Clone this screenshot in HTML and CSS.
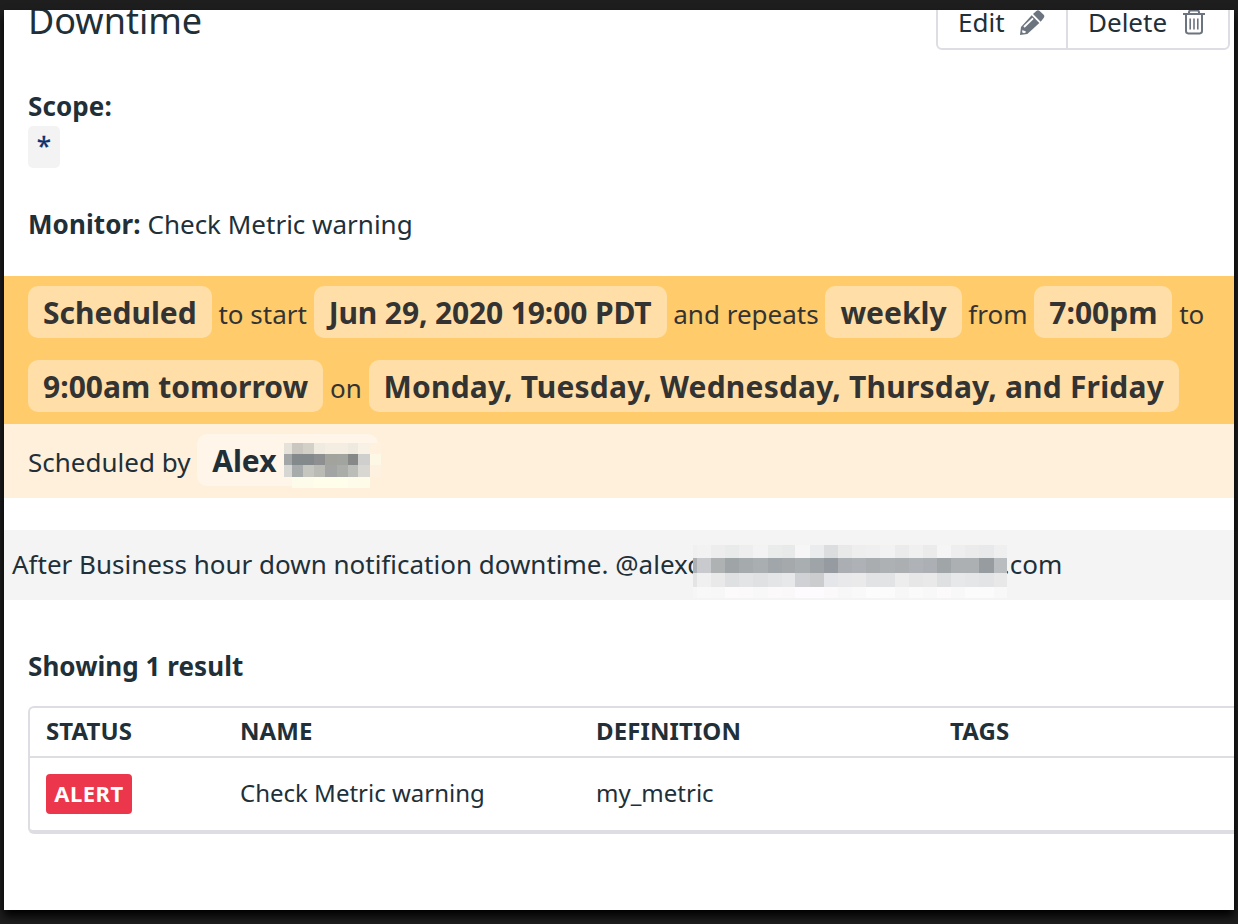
FILE: index.html
```html
<!DOCTYPE html>
<html lang="en">
<head>
<meta charset="utf-8">
<title>Downtime</title>
<link rel="stylesheet" href="styles.css">
</head>
<body>
<main class="panel">
  <header class="header">
    <h1 class="title">Downtime</h1>
    <div class="actions">
      <button class="action">Edit
        <svg class="icon pencil" viewBox="273 25 78 78"><path fill="#6c757f" fill-rule="evenodd" d="M311 44 334 67 298 100 276 103 279 79ZM315 40 325 31Q330 27 335 31L347 42Q351 47 347 52L338 63ZM290 81 317 55 313 51 286 77ZM284 87 282 95 288 98 294 95 292 91 287 90Z"/></svg>
      </button>
      <button class="action action-delete">Delete
        <svg class="icon trash" viewBox="0 0 22 26" fill="none" stroke="#6c757f" stroke-width="2"><path d="M0 5H22M6 5V3.2Q6 1.6 7.8 1.6H14.2Q16 1.6 16 3.2V5M3 5V22.1Q3 24.4 5.3 24.4H16.7Q19 24.4 19 22.1V5"/><path stroke-width="1.6" d="M7.2 9.6V20.4M11 9.6V20.4M14.8 9.6V20.4"/></svg>
      </button>
    </div>
  </header>
  <section class="scope"><b>Scope:</b><div><span class="tag">*</span></div></section>
  <section class="monitor"><b>Monitor:</b> Check Metric warning</section>
  <section class="schedule"><span class="pill">Scheduled</span> to start <span class="pill pill-date">Jun 29, 2020 19:00 PDT</span> and repeats <span class="pill">weekly</span> from <span class="pill">7:00pm</span> to<br><span class="pill pill-end">9:00am tomorrow</span> on <span class="pill pill-days">Monday, Tuesday, Wednesday, Thursday, and Friday</span></section>
  <section class="author">Scheduled by <span class="pill pill-author">Alex</span><svg class="mask mask-name" viewBox="284 440 100 50" shape-rendering="crispEdges"></svg></section>
  <section class="message"><span>After Business hour down notification downtime. @alexc</span><span class="suffix">.com</span><svg class="mask mask-mail" viewBox="693 545 314 54" shape-rendering="crispEdges"></svg></section>
  <h2 class="count">Showing 1 result</h2>
  <div class="table">
    <div class="row head"><span>STATUS</span><span>NAME</span><span>DEFINITION</span><span>TAGS</span></div>
    <div class="row"><span><b class="badge">ALERT</b></span><span>Check Metric warning</span><span>my_metric</span><span></span></div>
  </div>
</main>
<script src="mask.js"></script>
</body>
</html>
```
FILE: styles.css
```css
* { box-sizing: border-box; }
body {
  margin: 0;
  height: 924px;
  padding: 10px 4px 14px;
  overflow: hidden;
  background: #1e1e1e;
  font: 26px/36px "Noto Sans", sans-serif;
  color: #212f38;
}
b { letter-spacing: .1px; }
.panel {
  height: 900px;
  overflow: hidden;
  background: #fff;
  box-shadow: 0 6px 9px #000;
}
.header {
  display: flex;
  justify-content: space-between;
  height: 40px;
  padding: 0 4px 0 24px;
}
.title { margin: -13px 0 0; font-size: 36px; line-height: 48px; font-weight: 400; }
.actions {
  display: flex;
  height: 54px;
  margin-top: -14px;
  border: 2px solid #dddde3;
  border-radius: 6px;
}
.action {
  display: flex;
  align-items: center;
  width: 128px;
  padding: 0 0 2px 20px;
  border: 0;
  background: none;
  color: inherit;
  font: inherit;
}
.action-delete { width: 162px; border-left: 2px solid #dddde3; }
.icon { display: block; width: 26px; height: 26px; overflow: visible; }
.pencil { margin-left: 14px; }
.trash { width: 22px; margin-left: 16px; }
.scope { padding: 38px 24px 0; height: 119px; }
.tag {
  display: block;
  width: 32px;
  height: 42px;
  margin-top: 2px;
  border-radius: 5px;
  background: #f3f3f3;
  color: #0c316f;
  text-align: center;
  line-height: 38px;
  -webkit-text-stroke: .3px #0c316f;
}
.monitor { padding: 37px 24px 0; height: 107px; }
.schedule {
  height: 148px;
  padding: 1px 24px 0;
  background: #ffcb6b;
  color: #333;
  line-height: 74px;
  white-space: nowrap;
}
.pill {
  padding: 6px 15px 5px;
  border-radius: 10px;
  background: #ffdfa7;
  font-size: 30px;
  font-weight: 700;
  line-height: 72px;
}
.pill-date { letter-spacing: -.13px; }
.pill-end { letter-spacing: .03px; }
.pill-days { letter-spacing: .19px; }
.author {
  position: relative;
  height: 74px;
  padding: 1px 24px 0;
  background: #fef0db;
  line-height: 74px;
}
.pill-author { padding-right: 101px; background: #fff6e9; }
.mask { position: absolute; display: block; }
.mask-name { left: 280px; top: 16px; width: 100px; height: 50px; }
.message {
  position: relative;
  display: flex;
  height: 70px;
  margin-top: 32px;
  padding-left: 8px;
  background: #f4f4f4;
  line-height: 69px;
}
.suffix { margin-left: 303px; }
.mask-mail { left: 689px; top: 15px; width: 314px; height: 54px; }
.count { margin: 48px 24px 0; font-size: 26px; line-height: 36px; letter-spacing: .06px; }
.table {
  margin: 22px 0 0 24px;
  border: 2px solid #dddde3;
  border-width: 2px 0 4px 2px;
  border-radius: 6px 0 0 6px;
  font-size: 24px;
}
.row {
  display: grid;
  grid-template-columns: 194px 356px 354px 1fr;
  align-items: center;
  height: 72px;
  padding: 0 0 2px 16px;
}
.head { height: 50px; border-bottom: 2px solid #dddde3; font-weight: 700; letter-spacing: .1px; }
.badge {
  display: block;
  width: 86px;
  height: 40px;
  margin-top: 2px;
  border-radius: 4px;
  background: #ec364c;
  color: #fff;
  font-size: 22px;
  line-height: 39px;
  letter-spacing: .5px;
  text-align: center;
}
```
FILE: mask.js
```js
// Fills a pixelated mask: xs and ys are cell edges, rows hold one color per cell.
function fillMask(selector, xs, ys, rows) {
  const svg = document.querySelector(selector);
  rows.forEach((row, r) => row.split(" ").forEach((color, c) => {
    if (color === "-") return;
    const rect = document.createElementNS("http://www.w3.org/2000/svg", "rect");
    rect.setAttribute("x", xs[c]);
    rect.setAttribute("y", ys[r]);
    rect.setAttribute("width", xs[c + 1] - xs[c]);
    rect.setAttribute("height", ys[r + 1] - ys[r]);
    rect.setAttribute("fill", "#" + color);
    svg.appendChild(rect);
  }));
}
fillMask(".mask-name", [284, 292, 303, 314, 325, 337, 348, 358, 370, 381], [443, 454, 465, 477, 488], [
  "e5e2d9 c9c7bf d3d1c7 efebe1 f4eee2 f4eee2 eeeae0 f8f1e5 fff1de",
  "a2a6a6 84898c 84898c 8e8f90 a3a39e a2a49f 868988 cfd0ce fdf7e6",
  "d6d7d3 a7abab c5c6c0 babbb5 a2a5a4 abaea8 bbbdb8 d8d7d2 fff1df",
  "- fdfbea fdfbea fefeeb fefeeb fefeeb fefbea fefbe8 fff0dc"
]);
fillMask(".mask-mail",
  [693, 697, 711, 725, 739, 753, 768, 782, 795, 810, 824, 838, 852, 866, 880, 895, 909, 923, 937, 951, 965, 979, 994, 1007],
  [545, 558, 573, 587, 598], [
  "f0f0f0 f2f2f2 ededee e9eaea eeeeee f3f3f3 eaebeb e8e9e9 f6f6f6 ebecee dbdddf e9e9e9 eeeeee efefef f2f2f2 ebebeb f0f0f0 ebebeb f5f5f5 eeeeee ebebeb e8e9eb efefef",
  "aeb1b4 c9cacd aeb2b3 9fa4a7 a5abac a9aeb0 a0a6a9 a5a9ac a9aeb0 9fa4a8 969ba1 abafb3 aeb1b6 a9adb0 aeb1b4 abafb1 afb2b6 acb0b4 a0a5a8 adb0b3 acb0b3 979ca0 b9bdbf",
  "e4e4e4 f0f0f0 e9e9ea dfe0e1 e3e4e5 e0e1e2 e4e5e6 e7e8e9 d0d1d4 cbccce e5e6e9 e9e9eb eaeaeb e2e3e4 e2e3e4 ededed e7e7e8 e9e9e9 dee0e1 e7e8e9 e5e6e7 e3e4e6 e8e8e8",
  "f6f6f6 f8f8f8 f7f7f7 fdfafb fbf9fa f8f8f8 fbf9fa faf8f9 fdfbfd fdfbfd fbf9fa f7f7f7 f9f9f9 fcfcfc fbfbfb f7f7f7 fafafa f8f8f8 fdfafb f8f8f8 fbfbfb fbfbfb f8f8f8"
]);
```
